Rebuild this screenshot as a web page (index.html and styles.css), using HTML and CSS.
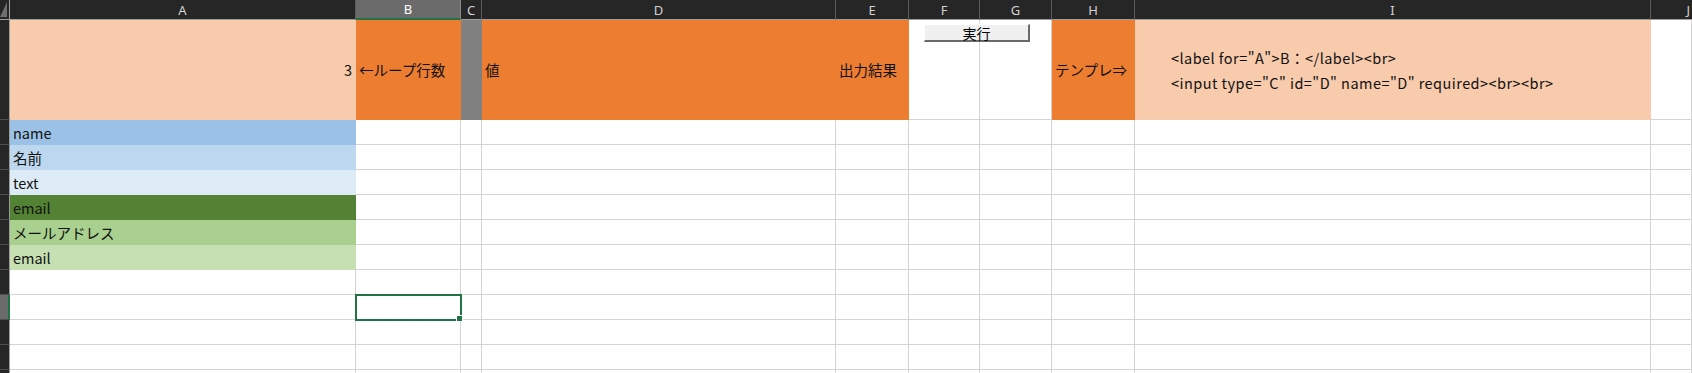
FILE: index.html
```html
<!DOCTYPE html>
<html lang="ja">
<head>
    <meta charset="UTF-8">
    <title>Sheet1</title>
    <link rel="stylesheet" href="styles.css">
</head>
<body>
    <div class="sheet">
        <div class="row colhead">
            <div class="corner"><span class="corner-tri"></span></div>
            <div class="ch">A</div>
            <div class="ch active">B</div>
            <div class="ch">C</div>
            <div class="ch">D</div>
            <div class="ch">E</div>
            <div class="ch">F</div>
            <div class="ch">G</div>
            <div class="ch">H</div>
            <div class="ch">I</div>
            <div class="ch ch-j">J</div>
        </div>

        <div class="row tall">
            <div class="rh"></div>
            <div class="c peach right">3</div>
            <div class="c orange">←ループ行数</div>
            <div class="c gray"></div>
            <div class="c orange">値</div>
            <div class="c orange">出力結果</div>
            <div class="c"></div>
            <div class="c"></div>
            <div class="c orange">テンプレ⇒</div>
            <div class="c peach template">
                <div>&lt;label for="A"&gt;B：&lt;/label&gt;&lt;br&gt;</div>
                <div>&lt;input type="C" id="D" name="D" required&gt;&lt;br&gt;&lt;br&gt;</div>
            </div>
            <div class="c"></div>
        </div>

        <div class="row">
            <div class="rh"></div>
            <div class="c blue-1">name</div>
            <div class="c"></div><div class="c"></div><div class="c"></div><div class="c"></div>
            <div class="c"></div><div class="c"></div><div class="c"></div><div class="c"></div><div class="c"></div>
        </div>
        <div class="row">
            <div class="rh"></div>
            <div class="c blue-2">名前</div>
            <div class="c"></div><div class="c"></div><div class="c"></div><div class="c"></div>
            <div class="c"></div><div class="c"></div><div class="c"></div><div class="c"></div><div class="c"></div>
        </div>
        <div class="row">
            <div class="rh"></div>
            <div class="c blue-3">text</div>
            <div class="c"></div><div class="c"></div><div class="c"></div><div class="c"></div>
            <div class="c"></div><div class="c"></div><div class="c"></div><div class="c"></div><div class="c"></div>
        </div>
        <div class="row">
            <div class="rh"></div>
            <div class="c green-1">email</div>
            <div class="c"></div><div class="c"></div><div class="c"></div><div class="c"></div>
            <div class="c"></div><div class="c"></div><div class="c"></div><div class="c"></div><div class="c"></div>
        </div>
        <div class="row">
            <div class="rh"></div>
            <div class="c green-2">メールアドレス</div>
            <div class="c"></div><div class="c"></div><div class="c"></div><div class="c"></div>
            <div class="c"></div><div class="c"></div><div class="c"></div><div class="c"></div><div class="c"></div>
        </div>
        <div class="row">
            <div class="rh"></div>
            <div class="c green-3">email</div>
            <div class="c"></div><div class="c"></div><div class="c"></div><div class="c"></div>
            <div class="c"></div><div class="c"></div><div class="c"></div><div class="c"></div><div class="c"></div>
        </div>
        <div class="row">
            <div class="rh"></div>
            <div class="c"></div>
            <div class="c"></div><div class="c"></div><div class="c"></div><div class="c"></div>
            <div class="c"></div><div class="c"></div><div class="c"></div><div class="c"></div><div class="c"></div>
        </div>
        <div class="row">
            <div class="rh active"></div>
            <div class="c"></div>
            <div class="c"></div><div class="c"></div><div class="c"></div><div class="c"></div>
            <div class="c"></div><div class="c"></div><div class="c"></div><div class="c"></div><div class="c"></div>
        </div>
        <div class="row">
            <div class="rh"><span>10</span></div>
            <div class="c"></div>
            <div class="c"></div><div class="c"></div><div class="c"></div><div class="c"></div>
            <div class="c"></div><div class="c"></div><div class="c"></div><div class="c"></div><div class="c"></div>
        </div>
        <div class="row">
            <div class="rh"><span>11</span></div>
            <div class="c"></div>
            <div class="c"></div><div class="c"></div><div class="c"></div><div class="c"></div>
            <div class="c"></div><div class="c"></div><div class="c"></div><div class="c"></div><div class="c"></div>
        </div>
        <div class="row">
            <div class="rh"></div>
            <div class="c"></div>
            <div class="c"></div><div class="c"></div><div class="c"></div><div class="c"></div>
            <div class="c"></div><div class="c"></div><div class="c"></div><div class="c"></div><div class="c"></div>
        </div>

        <!-- floating form button and the active cell frame -->
        <button class="run-btn">実行</button>
        <div class="selection"><span class="handle"></span></div>
    </div>
</body>
</html>
```

FILE: styles.css
```css
html, body {
    margin: 0;
    height: 100%;
    overflow: hidden;
    background: #ffffff;
    font-family: "Noto Sans CJK JP", "Noto Sans", sans-serif;
}
.sheet {
    position: relative;
    width: 1692px;
    height: 373px;
    overflow: hidden;
}
.row {
    display: grid;
    grid-template-columns: 10px 346px 105px 21px 354px 73px 71px 72px 83px 516px 41px;
    height: 25px;
}
.row.tall {
    height: 100px;
}
.row.colhead {
    height: 20px;
}
.corner {
    position: relative;
    background: #262626;
    border-right: 1px solid #9d9d9d;
    border-bottom: 1px solid #9d9d9d;
    box-sizing: border-box;
}
.corner-tri {
    position: absolute;
    right: 2px;
    bottom: 2px;
    width: 7px;
    height: 15px;
    background: #6f6f6f;
    clip-path: polygon(100% 0, 100% 100%, 0 100%);
}
.ch {
    background: #262626;
    color: #d2d2d2;
    font-family: "Noto Sans", sans-serif;
    font-size: 13px;
    display: flex;
    align-items: center;
    justify-content: center;
    box-sizing: border-box;
    border-right: 1px solid #5a5a5a;
    border-bottom: 1px solid #9d9d9d;
}
.ch.active {
    background: #6b6b6b;
    color: #ffffff;
    border-bottom: 2px solid #217346;
    border-right-color: #8a8a8a;
}
.ch-j {
    justify-content: flex-end;
    padding-right: 2px;
    border-right: none;
}
.rh {
    background: #262626;
    color: #d2d2d2;
    font-family: "Noto Sans", sans-serif;
    font-size: 13px;
    display: flex;
    align-items: center;
    justify-content: flex-end;
    overflow: hidden;
    box-sizing: border-box;
    border-right: 1px solid #9d9d9d;
    border-bottom: 1px solid #4f4f4f;
}
.rh span {
    flex: 0 0 34px;
    text-align: center;
}
.rh.active {
    background: #6b6b6b;
    border-right: 2px solid #217346;
}
.c {
    box-sizing: border-box;
    border-right: 1px solid #d4d4d4;
    border-bottom: 1px solid #d4d4d4;
    display: flex;
    align-items: center;
    padding: 0 3px;
    font-size: 14.5px;
    color: #111111;
    white-space: nowrap;
}
.c.right {
    justify-content: flex-end;
}
.peach { background: #f8cbad; border-color: #f8cbad; }
.orange { background: #ed7d31; border-color: #ed7d31; }
.gray { background: #808080; border-color: #808080; }
.blue-1 { background: #9bc2e6; border-color: #9bc2e6; }
.blue-2 { background: #bdd7ee; border-color: #bdd7ee; }
.blue-3 { background: #ddebf7; border-color: #ddebf7; }
.green-1 { background: #548235; border-color: #548235; }
.green-2 { background: #a9d08e; border-color: #a9d08e; }
.green-3 { background: #c6e0b4; border-color: #c6e0b4; }
.template {
    flex-direction: column;
    align-items: flex-start;
    justify-content: center;
    padding-left: 36px;
    line-height: 25px;
    letter-spacing: 0.45px;
    overflow: hidden;
}
.run-btn {
    position: absolute;
    left: 924px;
    top: 24px;
    width: 106px;
    height: 18px;
    padding: 0;
    background: #f0f0f0;
    border: none;
    border-top: 1px solid #ffffff;
    border-left: 1px solid #ffffff;
    border-right: 2px solid #6a6a6a;
    border-bottom: 2px solid #6a6a6a;
    box-sizing: border-box;
    font-family: "Noto Sans CJK JP", sans-serif;
    font-size: 14px;
    line-height: 14px;
    color: #000000;
}
.selection {
    position: absolute;
    left: 355px;
    top: 294px;
    width: 107px;
    height: 27px;
    border: 2px solid #217346;
    box-sizing: border-box;
}
.handle {
    position: absolute;
    right: -3px;
    bottom: -3px;
    width: 5px;
    height: 5px;
    background: #217346;
    border: 1px solid #ffffff;
}
```
